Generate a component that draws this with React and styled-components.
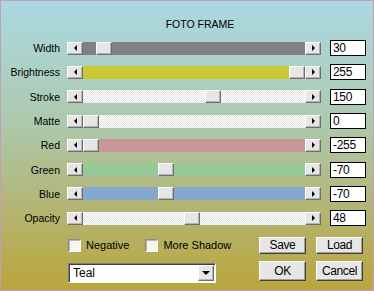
import React from "react"
import styled, { createGlobalStyle, css } from "styled-components"

const GlobalStyle = createGlobalStyle`
  html, body {
    margin: 0;
    padding: 0;
  }
  body {
    width: 374px;
    height: 291px;
    overflow: hidden;
    font-family: "Liberation Sans", Arial, sans-serif;
    color: #000;
  }
`

const raised = css`
  box-sizing: border-box;
  background: #e6e6e6;
  border: 1px solid;
  border-color: #fff #6e6e6e #6e6e6e #fff;
  box-shadow: inset -1px -1px 0 #b4b4b4;
`

const Window = styled.div`
  box-sizing: border-box;
  width: 374px;
  height: 291px;
  border: 1px solid #c79bbb;
  background: linear-gradient(180deg, #aad9e3 0%, #adc9ad 42%, #b3b677 70%, #b9a63c 100%);
  display: flex;
  flex-direction: column;
`

const Title = styled.div`
  margin-top: 16px;
  padding-left: 26px;
  height: 14px;
  line-height: 14px;
  font-size: 10.5px;
  text-align: center;
`

const Sliders = styled.div`
  margin-top: 5px;
  display: flex;
  flex-direction: column;
`

const Row = styled.div`
  height: 24.3px;
  display: flex;
  align-items: center;
`

const Label = styled.div`
  width: 59px;
  margin-right: 7px;
  text-align: right;
  font-size: 10.5px;
`

const Slider = styled.div`
  width: 254px;
  height: 13px;
  display: flex;
`

const Arrow = styled.div`
  ${raised};
  width: 16px;
  height: 13px;
  flex: none;
  display: flex;
  align-items: center;
  justify-content: center;
  &::after {
    content: "";
    width: 0;
    height: 0;
    border-top: 3px solid transparent;
    border-bottom: 3px solid transparent;
    ${({ $dir }) =>
      $dir === "left"
        ? css`border-right: 3px solid #000;`
        : css`border-left: 3px solid #000;`}
  }
`

const dither = css`
  background-color: #f4f4f4;
  background-image: repeating-conic-gradient(#ffffff 0 25%, #e2e2e2 0 50%);
  background-size: 2px 2px;
`

const Track = styled.div`
  position: relative;
  flex: 1;
  ${({ $fill }) => ($fill ? css`background: ${$fill};` : dither)}
`

const Thumb = styled.div`
  ${raised};
  position: absolute;
  top: 0;
  width: 16px;
  height: 13px;
`

const Value = styled.div`
  box-sizing: border-box;
  margin-left: 9px;
  width: 36px;
  height: 16px;
  border: 1px solid #000;
  background: #fff;
  padding-left: 2px;
  font-size: 12px;
  line-height: 14px;
  letter-spacing: -0.3px;
`

const Bottom = styled.div`
  margin-top: 6.6px;
  padding-left: 67px;
  display: grid;
  grid-template-columns: 181px 47px 47px;
  grid-template-rows: 17px 20px;
  column-gap: 10px;
  row-gap: 7px;
`

const Checks = styled.div`
  display: flex;
  align-items: center;
  gap: 16px;
`

const Check = styled.label`
  display: flex;
  align-items: center;
  gap: 5px;
  font-size: 11px;
`

const Box = styled.span`
  box-sizing: border-box;
  width: 13px;
  height: 13px;
  border: 1px solid;
  border-color: #8a8a8a #fafafa #fafafa #8a8a8a;
  box-shadow: inset 1px 1px 0 #b8b8b8;
  background: #f6f6f0;
`

const Select = styled.div`
  box-sizing: border-box;
  width: 148px;
  height: 20px;
  margin-top: 2px;
  border: 1px solid;
  border-color: #7a7a7a #fff #fff #7a7a7a;
  box-shadow: inset 1px 1px 0 #404040;
  background: #fff;
  display: flex;
  align-items: center;
  padding: 1px 1px 1px 4px;
  font-size: 12px;
`

const SelectText = styled.span`
  flex: 1;
`

const DropButton = styled.div`
  ${raised};
  width: 16px;
  height: 16px;
  display: flex;
  align-items: center;
  justify-content: center;
  &::after {
    content: "";
    border-left: 4px solid transparent;
    border-right: 4px solid transparent;
    border-top: 4px solid #000;
  }
`

const Button = styled.div`
  ${raised};
  display: flex;
  align-items: center;
  justify-content: center;
  font-size: 12px;
  letter-spacing: -0.4px;
  border-color: #fff #404040 #404040 #fff;
  box-shadow: inset -1px -1px 0 #a0a0a0;
`

const sliders = [
  { label: "Width", value: "30", pos: 0.064, fill: "#808080" },
  { label: "Brightness", value: "255", pos: 1, fill: "#c9c934" },
  { label: "Stroke", value: "150", pos: 0.59 },
  { label: "Matte", value: "0", pos: 0 },
  { label: "Red", value: "-255", pos: 0, fill: "#c89898" },
  { label: "Green", value: "-70", pos: 0.366, fill: "#98c898" },
  { label: "Blue", value: "-70", pos: 0.366, fill: "#84a9cd" },
  { label: "Opacity", value: "48", pos: 0.488 },
]

const App = () => {
  return (
    <>
      <GlobalStyle />
      <Window>
        <Title>FOTO FRAME</Title>
        <Sliders>
          {sliders.map((s) => (
            <Row key={s.label}>
              <Label>{s.label}</Label>
              <Slider>
                <Arrow $dir="left" />
                <Track $fill={s.fill}>
                  <Thumb style={{ left: `calc((100% - 16px) * ${s.pos})` }} />
                </Track>
                <Arrow $dir="right" />
              </Slider>
              <Value>{s.value}</Value>
            </Row>
          ))}
        </Sliders>
        <Bottom>
          <Checks>
            <Check>
              <Box />
              Negative
            </Check>
            <Check>
              <Box />
              More Shadow
            </Check>
          </Checks>
          <Button>Save</Button>
          <Button>Load</Button>
          <Select>
            <SelectText>Teal</SelectText>
            <DropButton />
          </Select>
          <Button>OK</Button>
          <Button>Cancel</Button>
        </Bottom>
      </Window>
    </>
  )
}

export default App
